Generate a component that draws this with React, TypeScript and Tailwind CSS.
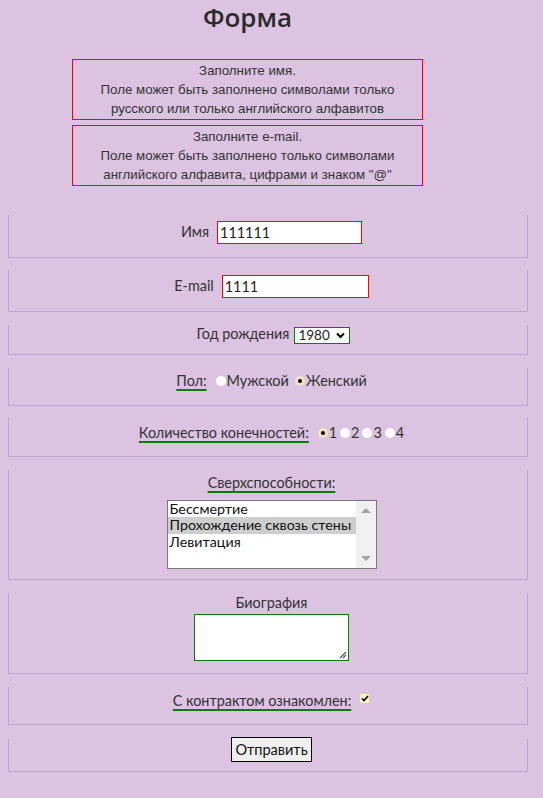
const gothic = "font-['Lato','Open_Sans',sans-serif]";

function Radio({ checked }: { checked?: boolean }) {
  return checked ? (
    <span className="inline-flex w-[10px] h-[10px] rounded-full bg-[#efe4c4] items-center justify-center mr-px">
      <span className="w-[4px] h-[4px] rounded-full bg-black" />
    </span>
  ) : (
    <span className="inline-block w-[10px] h-[10px] rounded-full bg-white mr-px" />
  );
}

function Fieldset({ className, children }: { className: string; children: React.ReactNode }) {
  return (
    <div className={`ml-2 w-[520px] border-x border-b border-[#bda5d4] pl-[7px] flex flex-col items-center ${className}`}>
      {children}
    </div>
  );
}

function Under({ children }: { children: React.ReactNode }) {
  return <span className="underline decoration-[#008000] decoration-2 underline-offset-[3px]">{children}</span>;
}

export default function App() {
  return (
    <div className={`min-h-[798px] bg-[#dbc3e1] text-[#333] ${gothic} text-[14.4px] pb-8`}>
      <div className="w-[495px] text-center">
        <h1 className="text-[26px] font-semibold leading-[34px] font-['Open_Sans',sans-serif] text-[#2b2b2b]">Форма</h1>
      </div>

      <div className="font-['Liberation_Sans',Arial,sans-serif] text-[13.3px] leading-[19px] text-center text-[#333]">
        <div className="ml-[72px] mt-[25px] w-[351px] border border-[#f00] py-px">
          <p>Заполните имя.</p>
          <p>Поле может быть заполнено символами только</p>
          <p>русского или только английского алфавитов</p>
        </div>
        <div className="ml-[72px] mt-[5px] w-[351px] border border-[#f00] py-px">
          <p>Заполните e-mail.</p>
          <p>Поле может быть заполнено только символами</p>
          <p>английского алфавита, цифрами и знаком "@"</p>
        </div>
      </div>

      <Fieldset className="mt-[29px] h-[43px] pt-[6px]">
        <div className="flex items-center gap-2">
          <span className="-mt-[2px]">Имя</span>
          <div className="w-[145px] h-[23px] border border-[#f00] bg-white px-[2px] flex items-center text-[#222]">111111</div>
        </div>
      </Fieldset>

      <Fieldset className="mt-[12px] h-[42px] pt-[5px]">
        <div className="flex items-center gap-2">
          <span className="-mt-[2px]">E-mail</span>
          <div className="w-[147px] h-[23px] border border-[#f00] bg-white px-[2px] flex items-center text-[#222]">1111</div>
        </div>
      </Fieldset>

      <Fieldset className="mt-[13px] h-[30px] pt-[1px]">
        <div className="flex items-center gap-[5px] pl-[4px]">
          <span className="-mt-[3px]">Год рождения</span>
          <div className="w-[56px] h-[17px] border border-[#008000] bg-white flex items-center justify-between pl-[3px] pr-[4px] text-[#222] text-[13.5px]">
            <span className="leading-none">1980</span>
            <svg width="9" height="7" viewBox="0 0 9 7"><path d="M1 1.5l3.5 3.5 3.5-3.5" fill="none" stroke="#000" strokeWidth="2" /></svg>
          </div>
        </div>
      </Fieldset>

      <Fieldset className="mt-[13px] h-[38px] pt-[2px]">
        <div className="flex items-center">
          <Under>Пол:</Under>
          <span className="ml-[9px] flex items-center"><Radio /></span>
          <span>Мужской</span>
          <span className="ml-[6px] flex items-center"><Radio checked /></span>
          <span>Женский</span>
        </div>
      </Fieldset>

      <Fieldset className="mt-[12px] h-[39px] pt-[4px]">
        <div className="flex items-center">
          <Under>Количество конечностей:</Under>
          <span className="ml-[9px] flex items-center"><Radio checked /></span>
          <span>1</span>
          <span className="ml-[3px] flex items-center"><Radio /></span>
          <span>2</span>
          <span className="ml-[3px] flex items-center"><Radio /></span>
          <span>3</span>
          <span className="ml-[3px] flex items-center"><Radio /></span>
          <span>4</span>
        </div>
      </Fieldset>

      <Fieldset className="mt-[13px] h-[110px] pt-[2px]">
        <Under>Сверхспособности:</Under>
        <div className="mt-[6px] w-[210px] h-[69px] border border-[#767676] bg-white flex text-[#111] text-[14.3px]">
          <div className="flex-1 leading-[16.5px] pt-0">
            <div className="pl-[2px]">Бессмертие</div>
            <div className="pl-[2px] bg-[#cecece]">Прохождение сквозь стены</div>
            <div className="pl-[2px]">Левитация</div>
          </div>
          <div className="w-[20px] bg-[#f0f0f0] flex flex-col justify-between items-center py-[7px]">
            <svg width="10" height="5" viewBox="0 0 10 5"><path d="M0 5L5 0L10 5Z" fill="#a3a3a3" /></svg>
            <svg width="10" height="5" viewBox="0 0 10 5"><path d="M0 0L5 5L10 0Z" fill="#a3a3a3" /></svg>
          </div>
        </div>
      </Fieldset>

      <Fieldset className="mt-[13px] h-[81px] pt-0">
        <span className="-mt-[1px]">Биография</span>
        <div className="relative mt-0 w-[155px] h-[47px] border border-[#008000] bg-white">
          <svg className="absolute right-[1px] bottom-[1px]" width="10" height="10" viewBox="0 0 10 10">
            <path d="M9 3L3 9M9 6L6 9" stroke="#555" strokeWidth="1.3" />
          </svg>
        </div>
      </Fieldset>

      <Fieldset className="mt-[13px] h-[38px] pt-[3px]">
        <div className="flex items-center">
          <Under>С контрактом ознакомлен:</Under>
          <span className="ml-[8px] -mt-[4px] w-[11px] h-[11px] bg-[#f6efcf] border border-[#dccfa4] flex items-center justify-center">
            <svg width="8" height="7" viewBox="0 0 8 7"><path d="M1 3.5l2 2L7 1" fill="none" stroke="#000" strokeWidth="1.6" /></svg>
          </span>
        </div>
      </Fieldset>

      <Fieldset className="mt-[14px] h-[33px] pt-0">
        <button className="-mt-[2px] w-[81px] h-[25px] border border-black bg-[#efefef] text-[#111] text-[14.5px]">Отправить</button>
      </Fieldset>
    </div>
  );
}
